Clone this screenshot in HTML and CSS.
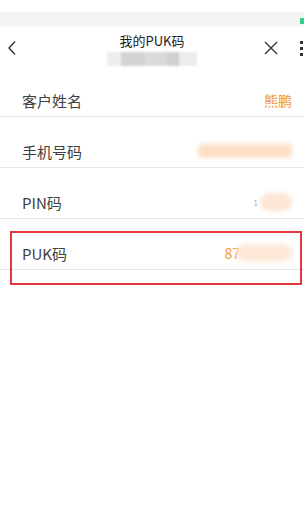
FILE: index.html
```html
<!DOCTYPE html>
<html lang="zh">
<head>
<meta charset="utf-8">
<link rel="stylesheet" href="styles.css">
</head>
<body>
<div class="page">
  <div class="status">
    <div class="status-band"></div>
    <div class="status-dot"></div>
  </div>
  <div class="header">
    <svg class="back" width="10" height="16" viewBox="0 0 10 16"><path d="M8 1.5 L2 8 L8 14.5" fill="none" stroke="#333" stroke-width="1.4"/></svg>
    <div class="titles">
      <div class="title">我的PUK码</div>
      <div class="subtitle"><span class="blk b1"></span><span class="blk b2"></span><span class="blk b3"></span><span class="blk b4"></span><span class="blk b5"></span></div>
    </div>
    <svg class="close" width="14" height="14" viewBox="0 0 14 14"><path d="M1 1 L13 13 M13 1 L1 13" fill="none" stroke="#333" stroke-width="1.4"/></svg>
    <div class="more"><span></span><span></span><span></span></div>
  </div>
  <div class="list">
    <div class="row"><span class="label">客户姓名</span><span class="value">熊鹏</span></div>
    <div class="row"><span class="label">手机号码</span><span class="blur blur-phone"></span></div>
    <div class="row"><span class="label">PIN码</span><span class="pin"><span class="tick">1</span><span class="blur blur-pin"></span></span></div>
    <div class="row puk"><span class="label">PUK码</span><span class="pukval"><span class="value">87</span><span class="blur blur-puk"></span></span>
      <div class="highlight"></div>
    </div>
  </div>
</div>
</body>
</html>
```
FILE: styles.css
```css
html, body {
  margin: 0;
  padding: 0;
  background: #fff;
}
.page {
  width: 304px;
  height: 524px;
  overflow: hidden;
  font-family: "Noto Sans CJK SC", "Noto Sans", sans-serif;
  color: #3a3a3a;
}
.status {
  height: 27px;
  position: relative;
}
.status-band {
  position: absolute;
  left: 0;
  right: 0;
  top: 12px;
  height: 15px;
  background: #f3f6f4;
}
.status-dot {
  position: absolute;
  right: 0;
  top: 18px;
  width: 4px;
  height: 6px;
  background: #2fd08c;
}
.header {
  height: 39px;
  position: relative;
  display: flex;
  justify-content: center;
}
.back {
  position: absolute;
  left: 7px;
  top: 13px;
}
.close {
  position: absolute;
  left: 264px;
  top: 14px;
}
.more {
  position: absolute;
  left: 300px;
  top: 14px;
  display: flex;
  flex-direction: column;
  gap: 3px;
}
.more span {
  width: 3px;
  height: 3px;
  background: #333;
}
.titles {
  display: flex;
  flex-direction: column;
  align-items: center;
  padding-top: 6px;
}
.title {
  font-size: 13px;
  line-height: 16px;
  color: #222;
}
.subtitle {
  margin-top: 3px;
  display: flex;
  height: 14px;
  filter: blur(1px);
}
.blk {
  display: block;
  height: 14px;
}
.b1 { width: 14px; background: #eeeeee; }
.b2 { width: 24px; background: #d3d3d3; }
.b3 { width: 22px; background: #dadada; }
.b4 { width: 12px; background: #d0d0d0; }
.b5 { width: 18px; background: #ececec; }
.row {
  border-bottom: 1px solid #e6e6e6;
  display: flex;
  align-items: center;
  justify-content: space-between;
  padding: 18px 12px 0 22px;
  box-sizing: content-box;
  height: 32px;
  position: relative;
}
.label {
  font-size: 15px;
  color: #404040;
}
.value {
  font-size: 14px;
  color: #f0963a;
}
.blur {
  display: block;
  filter: blur(2px);
}
.blur-phone {
  width: 94px;
  height: 14px;
  background: #fde0c6;
  border-radius: 4px;
}
.pin {
  display: flex;
  align-items: center;
}
.tick {
  font-size: 8px;
  color: #b9a79a;
  margin-right: 2px;
}
.blur-pin {
  width: 32px;
  height: 18px;
  background: #fde6d3;
  border-radius: 9px;
}
.pukval {
  display: flex;
  align-items: center;
}
.blur-puk {
  width: 56px;
  height: 18px;
  background: #fee9d8;
  border-radius: 9px;
  margin-left: -4px;
}
.highlight {
  position: absolute;
  left: 10px;
  top: 12px;
  width: 288px;
  height: 50px;
  border: 2px solid #e0383c;
  box-sizing: content-box;
  pointer-events: none;
}
```
